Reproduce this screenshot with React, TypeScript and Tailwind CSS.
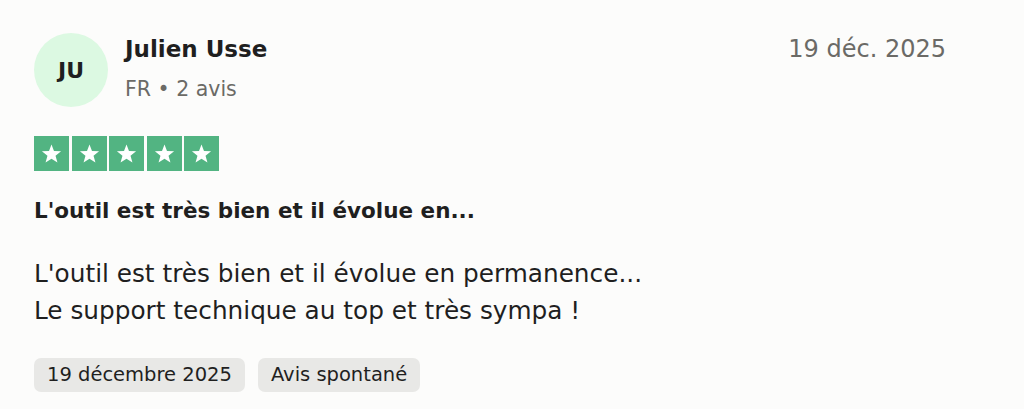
const Star = () => (
  <div className="w-[35px] h-[35px] bg-[#52b482] flex items-center justify-center">
    <svg viewBox="0 0 24 24" className="w-[23px] h-[23px]" fill="#ffffff">
      <path d="M12 2.5l2.6 6.9 7.4.3-5.8 4.6 2 7.2L12 17.4l-6.2 4.1 2-7.2L2 9.7l7.4-.3z" />
    </svg>
  </div>
);

const App = () => {
  return (
    <div className="w-[1024px] h-[409px] bg-[#fcfcfb] text-[#1f1f1f] font-['DejaVu_Sans',sans-serif] px-[34px] pt-[33px]">
      <div className="flex items-start justify-between pr-[44px]">
        <div className="flex items-center gap-[17px]">
          <div className="w-[74px] h-[74px] rounded-full bg-[#dcf9e2] flex items-center justify-center text-[22px] font-semibold text-[#1f1f1f]">
            JU
          </div>
          <div className="flex flex-col gap-[13px] -mt-[3px]">
            <div className="text-[23px] font-semibold leading-tight">Julien Usse</div>
            <div className="text-[20.5px] text-[#6b6a66] leading-tight">FR • 2 avis</div>
          </div>
        </div>
        <div className="text-[24px] text-[#6b6a66] leading-tight pt-[1px]">19 déc. 2025</div>
      </div>

      <div className="flex gap-[2.5px] mt-[29px]">
        <Star />
        <Star />
        <Star />
        <Star />
        <Star />
      </div>

      <div className="mt-[27px] text-[21.5px] font-bold leading-tight">
        L'outil est très bien et il évolue en...
      </div>

      <div className="mt-[30px] text-[24.75px] leading-[37px]">
        <div>L'outil est très bien et il évolue en permanence...</div>
        <div>Le support technique au top et très sympa !</div>
      </div>

      <div className="flex gap-[13px] mt-[29px]">
        <div className="h-[34px] px-[13px] rounded-[7px] bg-[#e8e8e6] flex items-center text-[19.5px]">
          19 décembre 2025
        </div>
        <div className="h-[34px] px-[13px] rounded-[7px] bg-[#e8e8e6] flex items-center text-[19.5px]">
          Avis spontané
        </div>
      </div>
    </div>
  );
};

export default App;
